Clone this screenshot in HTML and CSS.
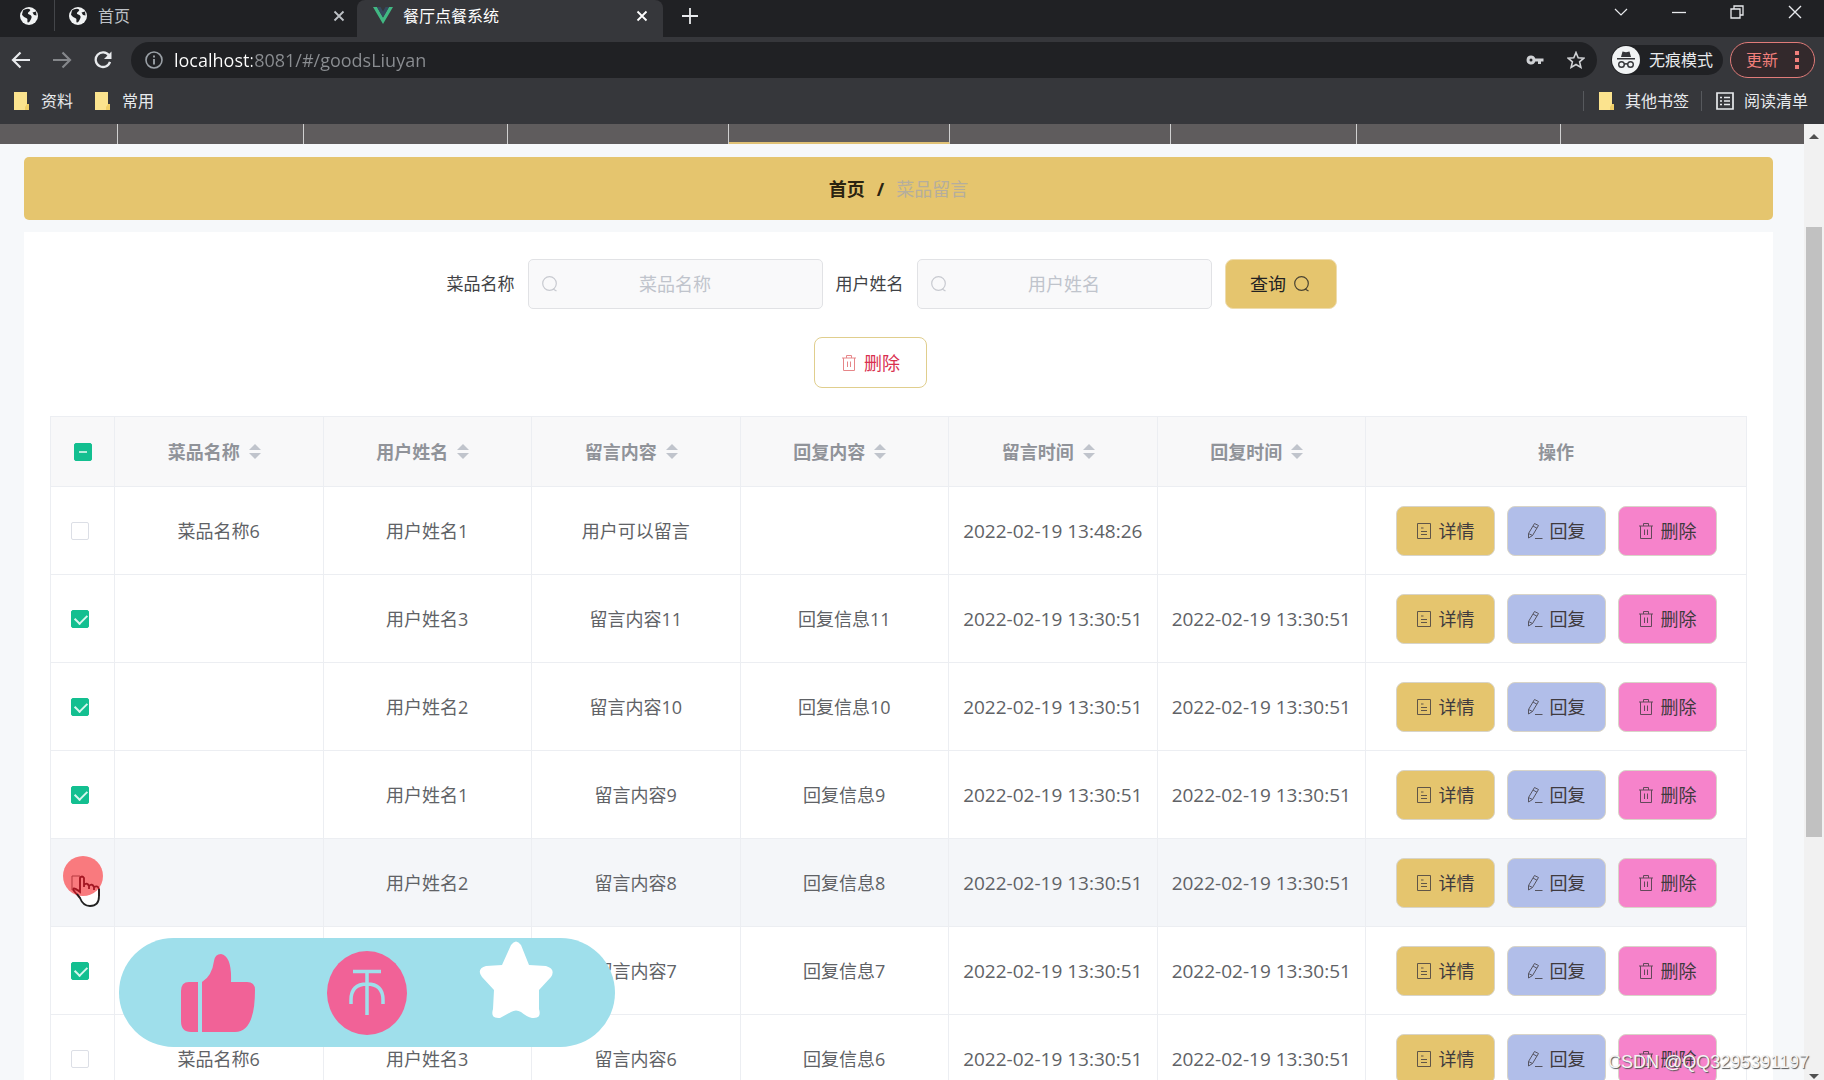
FILE: index.html
```html
<!DOCTYPE html>
<html lang="zh-CN">
<head>
<meta charset="utf-8">
<title>餐厅点餐系统</title>
<link rel="stylesheet" href="styles.css">
</head>
<body>
<svg class="sprite" aria-hidden="true">
  <symbol id="globe" viewBox="0 0 18 18"><circle cx="9" cy="9" r="9" fill="#f1f3f4"/><path d="M3 3.500C5 2.500 8 1 10 2.500C11 4 8.500 4.500 8 6C7.500 7.500 9.500 7 11 8.500C12.500 10 11 11.500 10.500 13C10 14.500 8 16.500 7.500 15C7 13.500 8 12.500 7 11.500C5.500 10.500 2.500 9.500 2 7.500ZM12.500 5.500L16 4.500L16.500 8.500L14 8Z" fill="#202124"/></symbol>
  <symbol id="close" viewBox="0 0 12 12"><path d="M1.500 1.500L10.500 10.500M10.500 1.500L1.500 10.500" fill="none" stroke="currentColor" stroke-width="1.800"/></symbol>
  <symbol id="folder" viewBox="0 0 15 18"><path d="M0 0H13V12H15V18H0Z" fill="#fbe38e"/><path d="M13 12H15V18H11V15Z" fill="#f0cf68"/></symbol>
  <symbol id="search" viewBox="0 0 18 18"><circle cx="8.500" cy="8.500" r="6.800" fill="none" stroke="currentColor" stroke-width="1.200"/><path d="M12 14L15.500 16" stroke="currentColor" stroke-width="1.200"/></symbol>
  <symbol id="trash" viewBox="0 0 16 18"><path d="M1 4H15M5.500 4V1.500H10.500V4M2.500 4V16.500H13.500V4M6.500 7.500V13M9.500 7.500V13" fill="none" stroke="currentColor"/></symbol>
  <symbol id="doc" viewBox="0 0 16 18"><path d="M1.500 1.500H14.500V16.500H1.500ZM5 6H7.500M5 9.500H11M5 12.500H11" fill="none" stroke="currentColor"/></symbol>
  <symbol id="edit" viewBox="0 0 16 18"><path d="M7.500 1.500L11.500 3.500L5.500 13.500L1.500 16L1.500 11.500ZM6 4L10 6.300M1.500 11.500L5.500 13.500M8 16.500H15.500" fill="none" stroke="currentColor"/></symbol>
</svg>

<header class="browser">
  <div class="tabs">
    <button class="tab pinned" aria-label="固定标签页"><svg class="globe"><use href="#globe"/></svg></button>
    <div class="tab"><svg class="globe"><use href="#globe"/></svg><span class="tab-title">首页</span><button class="tab-close" aria-label="关闭"><svg><use href="#close"/></svg></button></div>
    <div class="tab active"><svg class="vue" viewBox="0 0 20 17"><path d="M0 0H4L10 10.500L16 0H20L10 17Z" fill="#41b883"/><path d="M4 0H7.500L10 4.500L12.500 0H16L10 10.500Z" fill="#35495e"/></svg><span class="tab-title">餐厅点餐系统</span><button class="tab-close" aria-label="关闭"><svg><use href="#close"/></svg></button></div>
    <button class="new-tab" aria-label="新标签页"><svg viewBox="0 0 16 16"><path d="M8 0V16M0 8H16" stroke="currentColor" stroke-width="1.800"/></svg></button>
    <div class="window-controls">
      <button aria-label="搜索标签页"><svg viewBox="0 0 14 14"><path d="M1 4L7 10L13 4" fill="none" stroke="currentColor" stroke-width="1.200"/></svg></button>
      <button aria-label="最小化"><svg viewBox="0 0 14 14"><path d="M0 7.500H14" stroke="currentColor" stroke-width="1.300"/></svg></button>
      <button aria-label="还原"><svg viewBox="0 0 14 14"><path d="M1 4H10V13H1ZM4 4V1H13V10H10" fill="none" stroke="currentColor" stroke-width="1.300"/></svg></button>
      <button aria-label="关闭窗口"><svg viewBox="0 0 14 14"><path d="M1 1L13 13M13 1L1 13" stroke="currentColor" stroke-width="1.400"/></svg></button>
    </div>
  </div>
  <div class="toolbar">
    <button class="nav-button" aria-label="后退"><svg viewBox="0 0 20 18"><path d="M19 9H2M9.500 1.500L2 9L9.500 16.500" fill="none" stroke="currentColor" stroke-width="2.200"/></svg></button>
    <button class="nav-button dim" aria-label="前进"><svg viewBox="0 0 20 18"><path d="M1 9H18M10.500 1.500L18 9L10.500 16.500" fill="none" stroke="currentColor" stroke-width="2.200"/></svg></button>
    <button class="nav-button" aria-label="重新加载"><svg viewBox="0 0 20 18"><path d="M16 4.500A7.300 7.300 0 1 0 17 10.800" fill="none" stroke="currentColor" stroke-width="2.300"/><path d="M18.500 0.500V8H11Z" fill="currentColor"/></svg></button>
    <div class="omnibox">
      <svg class="info" viewBox="0 0 18 18"><circle cx="9" cy="9" r="8" fill="none" stroke="currentColor" stroke-width="1.600"/><path d="M9 8V13.500M9 4.500V6.500" stroke="currentColor" stroke-width="1.900"/></svg>
      <input class="address" type="text" aria-label="地址栏" value="localhost:8081/#/goodsLiuyan">
      <button aria-label="密码"><svg viewBox="0 0 18 18"><path d="M5 4.500A4.500 4.500 0 1 0 9.300 10.500H12V13H15V10.500H17.500V7.500H9.300A4.500 4.500 0 0 0 5 4.500ZM5 7.500A1.500 1.500 0 1 1 5 10.500A1.500 1.500 0 1 1 5 7.500Z" fill="currentColor" fill-rule="evenodd"/></svg></button>
      <button aria-label="收藏"><svg viewBox="0 0 18 18"><path d="M9 1.500L11.200 6.700L16.800 7.200L12.600 10.900L13.900 16.400L9 13.500L4.100 16.400L5.400 10.900L1.200 7.200L6.800 6.700Z" fill="none" stroke="currentColor" stroke-width="1.600"/></svg></button>
    </div>
    <button class="incognito"><svg viewBox="0 0 28 28"><circle cx="14" cy="14" r="14" fill="#f1f3f4"/><path d="M10.500 5.500L14 6.300L17.500 5.500L19 11H9ZM5 12H23V13.500H5Z" fill="#35363a"/><path d="M12 18.500Q14 17 16 18.500" fill="none" stroke="#35363a" stroke-width="1.400"/><circle cx="9.500" cy="18.500" r="2.800" fill="none" stroke="#35363a" stroke-width="1.400"/><circle cx="18.500" cy="18.500" r="2.800" fill="none" stroke="#35363a" stroke-width="1.400"/></svg>无痕模式</button>
    <button class="update">更新<svg viewBox="0 0 4 18"><path d="M0 0H4V4H0ZM0 7H4V11H0ZM0 14H4V18H0Z" fill="currentColor"/></svg></button>
  </div>
  <nav class="bookmarks">
    <button><svg class="folder"><use href="#folder"/></svg>资料</button>
    <button><svg class="folder"><use href="#folder"/></svg>常用</button>
    <button class="divided push"><svg class="folder"><use href="#folder"/></svg>其他书签</button>
    <button class="divided"><svg class="reading" viewBox="0 0 18 18"><path d="M1 1H17V17H1ZM4 5.500H6M8 5.500H14M4 9H6M8 9H14M4 12.500H6M8 12.500H14" fill="none" stroke="currentColor" stroke-width="1.700"/></svg>阅读清单</button>
  </nav>
</header>

<div class="viewport">
  <main class="page">
    <ul class="site-nav"><li></li><li></li><li></li><li></li><li class="current"></li><li></li><li></li><li></li><li></li></ul>
    <div class="content">
      <nav class="breadcrumb"><a href="#/">首页</a><b>/</b><span>菜品留言</span></nav>
      <section class="card">
        <form class="search">
          <label for="dish">菜品名称</label>
          <div class="field"><svg><use href="#search"/></svg><input id="dish" type="text" placeholder="菜品名称"></div>
          <label for="user">用户姓名</label>
          <div class="field"><svg><use href="#search"/></svg><input id="user" type="text" placeholder="用户姓名"></div>
          <button class="button query" type="button">查询<svg><use href="#search"/></svg></button>
        </form>
        <div class="actions"><button class="button batch-delete"><svg><use href="#trash"/></svg>删除</button></div>
        <table>
          <colgroup><col class="col-check"><col><col><col><col><col><col><col class="col-ops"></colgroup>
          <thead><tr>
            <th><input class="partial" type="checkbox" aria-label="全选"></th>
            <th><button class="sort">菜品名称<i></i></button></th>
            <th><button class="sort">用户姓名<i></i></button></th>
            <th><button class="sort">留言内容<i></i></button></th>
            <th><button class="sort">回复内容<i></i></button></th>
            <th><button class="sort">留言时间<i></i></button></th>
            <th><button class="sort">回复时间<i></i></button></th>
            <th>操作</th>
          </tr></thead>
          <tbody>
            <tr><td><input type="checkbox" aria-label="选择"></td><td>菜品名称6</td><td>用户姓名1</td><td>用户可以留言</td><td></td><td class="time">2022-02-19 13:48:26</td><td></td><td><div class="ops"><button class="button detail"><svg><use href="#doc"/></svg>详情</button><button class="button reply"><svg><use href="#edit"/></svg>回复</button><button class="button remove"><svg><use href="#trash"/></svg>删除</button></div></td></tr>
            <tr><td><input type="checkbox" aria-label="选择" checked></td><td></td><td>用户姓名3</td><td>留言内容11</td><td>回复信息11</td><td class="time">2022-02-19 13:30:51</td><td class="time">2022-02-19 13:30:51</td><td><div class="ops"><button class="button detail"><svg><use href="#doc"/></svg>详情</button><button class="button reply"><svg><use href="#edit"/></svg>回复</button><button class="button remove"><svg><use href="#trash"/></svg>删除</button></div></td></tr>
            <tr><td><input type="checkbox" aria-label="选择" checked></td><td></td><td>用户姓名2</td><td>留言内容10</td><td>回复信息10</td><td class="time">2022-02-19 13:30:51</td><td class="time">2022-02-19 13:30:51</td><td><div class="ops"><button class="button detail"><svg><use href="#doc"/></svg>详情</button><button class="button reply"><svg><use href="#edit"/></svg>回复</button><button class="button remove"><svg><use href="#trash"/></svg>删除</button></div></td></tr>
            <tr><td><input type="checkbox" aria-label="选择" checked></td><td></td><td>用户姓名1</td><td>留言内容9</td><td>回复信息9</td><td class="time">2022-02-19 13:30:51</td><td class="time">2022-02-19 13:30:51</td><td><div class="ops"><button class="button detail"><svg><use href="#doc"/></svg>详情</button><button class="button reply"><svg><use href="#edit"/></svg>回复</button><button class="button remove"><svg><use href="#trash"/></svg>删除</button></div></td></tr>
            <tr class="hovered"><td><input type="checkbox" aria-label="选择"></td><td></td><td>用户姓名2</td><td>留言内容8</td><td>回复信息8</td><td class="time">2022-02-19 13:30:51</td><td class="time">2022-02-19 13:30:51</td><td><div class="ops"><button class="button detail"><svg><use href="#doc"/></svg>详情</button><button class="button reply"><svg><use href="#edit"/></svg>回复</button><button class="button remove"><svg><use href="#trash"/></svg>删除</button></div></td></tr>
            <tr><td><input type="checkbox" aria-label="选择" checked></td><td></td><td></td><td>留言内容7</td><td>回复信息7</td><td class="time">2022-02-19 13:30:51</td><td class="time">2022-02-19 13:30:51</td><td><div class="ops"><button class="button detail"><svg><use href="#doc"/></svg>详情</button><button class="button reply"><svg><use href="#edit"/></svg>回复</button><button class="button remove"><svg><use href="#trash"/></svg>删除</button></div></td></tr>
            <tr><td><input type="checkbox" aria-label="选择"></td><td>菜品名称6</td><td>用户姓名3</td><td>留言内容6</td><td>回复信息6</td><td class="time">2022-02-19 13:30:51</td><td class="time">2022-02-19 13:30:51</td><td><div class="ops"><button class="button detail"><svg><use href="#doc"/></svg>详情</button><button class="button reply"><svg><use href="#edit"/></svg>回复</button><button class="button remove"><svg><use href="#trash"/></svg>删除</button></div></td></tr>
          </tbody>
        </table>
      </section>
    </div>
  </main>
  <div class="scrollbar"><i class="arrow up"></i><div class="track"><div class="thumb"></div></div><i class="arrow down"></i></div>
</div>

<svg class="pointer" viewBox="0 0 44 52"><path d="M18 42L12 35Q10 31 14 33L18 36V22Q20 19 22 22V29Q25 26 27 30Q30 27 32 31Q36 29 37 33V40Q37 50 28 50Q21 50 18 42Z" fill="#fff"/><circle cx="21" cy="20" r="20" fill="#f97377" fill-opacity=".95"/><path d="M10 20H18V34H10Z" fill="none" stroke="#b5393f"/><path d="M18 42L12 35Q10 31 14 33L18 36V22Q20 19 22 22V31M22 29Q25 26 27 30V33M27 30Q30 27 32 31V34M32 31Q36 29 37 33V40" fill="none" stroke="#a31622" stroke-width="1.800"/><path d="M15 38L18 42Q21 50 28 50Q37 50 37 40V33" fill="none" stroke="#222" stroke-width="1.800"/></svg>

<aside class="reactions">
  <button aria-label="点赞"><svg viewBox="0 0 74 78"><path d="M8 28H17V78H10Q0 78 0 67V37Q0 28 8 28ZM21 28Q31 22 33 7Q34 0 40 0Q51 2 50 28H66Q74 28 74 36Q74 78 54 78H21Z" fill="#f16297"/></svg></button>
  <button aria-label="投币"><svg viewBox="0 0 80 84"><ellipse cx="40" cy="42" rx="40" ry="42" fill="#f16297"/><path d="M26 20.500H54M40 20V64M24 53V49Q24 33 40 33Q56 33 56 49V53" fill="none" stroke="#9fdfeb" stroke-width="3.500"/></svg></button>
  <button class="favorite" aria-label="收藏"><svg viewBox="0 0 74 78"><path d="M32 4Q37 -3 42 4L50 24L67 25Q77 28 72 36L60 49V68Q63 78 53 77Q48 76 42 71Q37 68 32 71L21 77Q11 78 14 68L15 49L3 36Q-3 28 7 25L23 24Z" fill="#fff"/></svg></button>
</aside>
<div class="watermark">CSDN @QQ3295391197</div>
</body>
</html>
```
FILE: styles.css
```css
* { box-sizing: border-box; }
body {
  margin: 0;
  height: 100vh;
  display: flex;
  flex-direction: column;
  overflow: hidden;
  position: relative;
  background: #f6f8fa;
  color: #606266;
  font: 18px/24px "Open Sans", "Noto Sans CJK SC", sans-serif;
}
button, input { font: inherit; color: inherit; }
button { border: 0; padding: 0; background: none; white-space: nowrap; }
svg { flex: none; display: block; }
.sprite { position: absolute; width: 0; height: 0; }

/* Browser frame */
.browser { flex: none; background: #36373b; color: #e8eaed; font-size: 16px; }
.tabs { display: flex; height: 37px; background: #202124; padding-left: 4px; }
.tab { display: flex; align-items: center; width: 302px; padding: 0 12px 6px 14px; gap: 11px; color: #bdc1c6; }
.tab.pinned { width: 51px; padding-left: 16px; border-right: 1px solid #44464a; height: 31px; padding-bottom: 0; }
.tab.active { width: 306px; padding-left: 16px; padding-right: 15px; gap: 10px; background: #36373b; color: #fff; border-radius: 8px 8px 0 0; }
.globe { width: 18px; height: 18px; }
.vue { width: 20px; height: 17px; }
.tab-title { flex: 1; }
.tab-close svg { width: 12px; height: 12px; }
.new-tab { width: 54px; display: flex; justify-content: center; padding-top: 8px; }
.new-tab svg { width: 16px; height: 16px; }
.window-controls { display: flex; margin-left: auto; height: 24px; }
.window-controls button { width: 58px; display: flex; justify-content: center; align-items: center; }
.window-controls svg { width: 14px; height: 14px; }
.toolbar { display: flex; align-items: center; height: 46px; padding: 0 9px 0 11px; }
.nav-button { width: 41px; }
.nav-button svg { width: 20px; height: 18px; }
.nav-button.dim { color: #85878b; }
.omnibox { flex: 1; display: flex; align-items: center; gap: 11px; height: 36px; margin-right: 14px; margin-left: -3px; padding: 0 6px 0 14px; border-radius: 18px; background: #202124; color: #d0d2d5; }
.omnibox button { width: 30px; display: flex; justify-content: center; }
.omnibox svg { width: 18px; height: 18px; }
.omnibox .info { color: #9aa0a6; }
.address { flex: 1; min-width: 0; border: 0; padding: 0; font-size: 18px; -webkit-text-fill-color: transparent; background: linear-gradient(90deg, #ffffff 78px, #8b8e92 78px); -webkit-background-clip: text; background-clip: text; }
.incognito { display: flex; align-items: center; gap: 9px; height: 30px; margin-right: 7px; padding: 0 10px 0 1px; border-radius: 15px; background: #202124; }
.incognito svg { width: 28px; height: 28px; }
.update { display: flex; align-items: center; justify-content: space-between; width: 85px; height: 36px; padding: 0 15px; border: 1px solid #e07b79; border-radius: 18px; color: #f07f7b; background: #33292c; }
.update svg { width: 4px; height: 18px; }
.bookmarks { display: flex; align-items: center; height: 41px; padding: 0 16px 6px 14px; gap: 22px; }
.bookmarks button { display: flex; align-items: center; gap: 12px; }
.bookmarks .push { margin-left: auto; }
.bookmarks .divided { border-left: 1px solid #57595d; padding-left: 15px; height: 20px; margin-right: -10px; gap: 11px; }
.bookmarks .divided:last-child { margin-right: 0; padding-left: 14px; gap: 10px; }
.folder { width: 15px; height: 18px; }
.reading { width: 18px; height: 18px; }

/* Page */
.viewport { flex: 1; min-height: 0; display: flex; overflow: hidden; }
.page { flex: 1; min-width: 0; }
.site-nav { display: grid; grid-template-columns: 118fr 186fr 204fr 221fr 221fr 221fr 186fr 204fr 243fr; height: 20px; margin: 0; padding: 0; list-style: none; background: #5f5c5d; }
.site-nav li { border-right: 1px solid #d0d0d0; }
.site-nav li:last-child { border-right: 0; }
.site-nav .current { border-bottom: 2px solid #dfc176; }
.content { padding: 13px 31px 0 24px; }
.breadcrumb { display: flex; justify-content: center; align-items: center; gap: 12px; height: 63px; margin-bottom: 12px; border-radius: 5px; background: #e5c56e; }
.breadcrumb a, .breadcrumb b { color: #2b2410; font-weight: 700; text-decoration: none; }
.breadcrumb span { color: #b5ae9d; }
.card { padding: 27px 26px 26px; background: #fff; }
.search { display: flex; justify-content: center; align-items: center; gap: 13px; padding-right: 14px; margin-bottom: 28px; }
.search label { font-size: 17px; color: #404245; }
.field { position: relative; width: 295px; color: #c8cad0; }
.field svg { position: absolute; left: 13px; top: 16px; width: 18px; height: 18px; }
.field input { display: block; width: 100%; height: 50px; padding: 0 32px; border: 1px solid #e1e2e5; border-radius: 5px; background: #f9f9fa; color: #606266; text-align: center; }
.field input::placeholder { color: #c0c4cc; opacity: 1; }
.button { display: inline-flex; align-items: center; justify-content: center; gap: 7px; height: 50px; border: 1px solid #d8d4c8; border-radius: 8px; color: #3f3a3e; }
.button svg { width: 16px; height: 18px; opacity: .8; }
.query { width: 112px; background: #e5c56e; border-color: #eedcae; color: #222; }
.query svg { width: 18px; }
.actions { display: flex; justify-content: center; padding-right: 56px; margin-bottom: 28px; }
.batch-delete { width: 113px; height: 51px; background: #fff; border-color: #e0ce8d; color: #d9304f; }
.batch-delete svg { color: #e0686c; }

table { width: 100%; table-layout: fixed; border-collapse: collapse; border: 1px solid #eceef2; text-align: center; }
.col-check { width: 64px; }
.col-ops { width: 381px; }
th, td { padding: 0; border: 1px solid #eceef2; }
th { height: 70px; background: #f8f8f9; color: #909399; font-weight: 700; }
td { height: 88px; }
.time { font-size: 19px; }
.sort { display: inline-flex; align-items: center; font-weight: 700; }
.sort i { width: 30px; height: 15px; display: flex; flex-direction: column; align-items: center; justify-content: space-between; }
.sort i::before, .sort i::after { content: ""; border: 6px solid transparent; border-top: 0; border-bottom: 6px solid #c0c4cc; }
.sort i::after { border-bottom: 0; border-top: 6px solid #c0c4cc; }
input[type="checkbox"] { appearance: none; display: block; width: 18px; height: 18px; margin: 0 auto 0 20px; border: 1px solid #dcdfe6; border-radius: 2px; background: #fff; }
input[type="checkbox"]:checked, input.partial { border-color: #13bf90; background: #13bf90; }
input[type="checkbox"]:checked::after { content: ""; display: block; width: 6px; height: 10px; margin: 1px 0 0 5px; border: solid #d9f7ee; border-width: 0 2px 2px 0; transform: rotate(45deg); }
input[type="checkbox"].partial { margin-left: 23px; }
input.partial::after { content: ""; display: block; width: 8px; height: 2px; margin: 7px 4px; background: #b5ecdc; }
.hovered { background: #f4f6f9; }
.ops { display: flex; justify-content: center; gap: 12px; }
.ops .button { width: 99px; }
.detail { background: #e5c56e; }
.reply { background: #b1bee9; }
.remove { background: #f683cb; }

.scrollbar { flex: none; width: 20px; display: flex; flex-direction: column; align-items: center; justify-content: space-between; padding: 10px 0 1px; background: #f1f1f1; }
.track { flex: 1; width: 16px; padding-top: 88px; }
.thumb { height: 72%; background: #c1c1c1; }
.arrow { border: 5px solid transparent; border-top: 0; border-bottom: 5px solid #505050; }
.arrow.down { border-bottom: 0; border-top: 5px solid #505050; }

/* Overlays */
.pointer { position: absolute; left: 62px; top: 856px; width: 44px; height: 52px; }
.reactions { position: absolute; left: 119px; top: 938px; width: 496px; height: 109px; padding: 0 62px; display: flex; align-items: center; justify-content: space-between; border-radius: 55px; background: #9fdfeb; }
.reactions svg { width: 74px; height: 78px; }
.reactions button:nth-child(2) svg { width: 80px; height: 84px; }
.reactions .favorite { align-self: flex-start; padding-top: 3px; }
.watermark { position: absolute; right: 15px; bottom: 8px; color: #f4f4f4; font: 18px/20px "Liberation Sans", sans-serif; text-shadow: 1px 1px 1px #555; }
```
